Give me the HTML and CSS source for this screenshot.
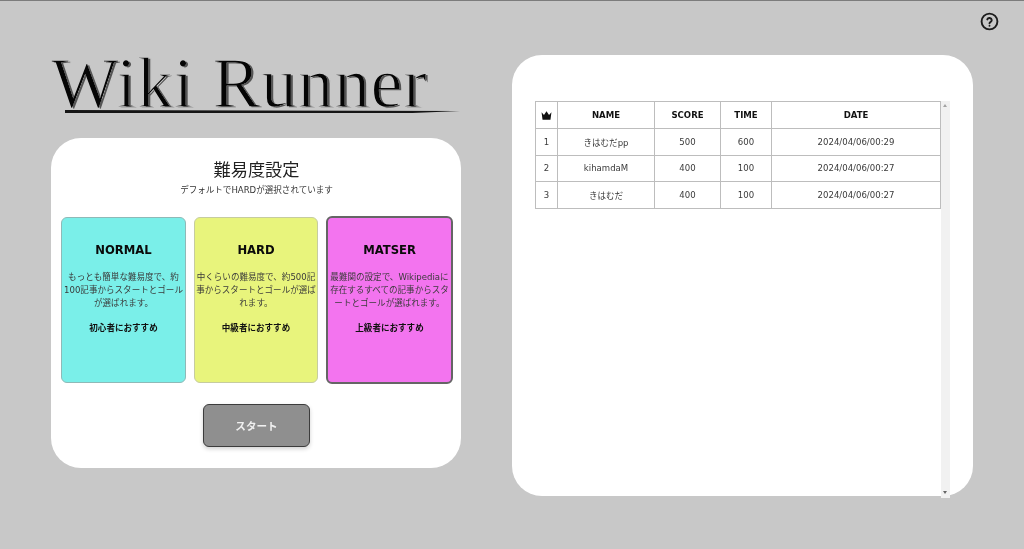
FILE: index.html
```html
<!DOCTYPE html>
<html lang="ja">
<head>
<meta charset="utf-8">
<title>Wiki Runner</title>
<link rel="stylesheet" href="styles.css">
</head>
<body>
<a class="help" aria-label="ヘルプ">
  <svg viewBox="0 0 24 24" width="19" height="19" fill="none" stroke="#1c1c1c" stroke-width="2.4" stroke-linecap="round" stroke-linejoin="round">
    <circle cx="12" cy="12" r="10"/>
    <path d="M9.2 9.4a2.9 2.9 0 0 1 5.6.9c0 1.9-2.8 2.4-2.8 4"/>
    <path d="M12 17.4v.1"/>
  </svg>
</a>
<main class="page">
  <section class="left">
    <div class="logo">
      <h1 class="logo-text">Wiki Runner</h1>
      <div class="logo-rule"></div>
    </div>
    <div class="panel settings">
      <h2 class="settings-title">難易度設定</h2>
      <p class="settings-sub">デフォルトでHARDが選択されています</p>
      <div class="cards">
        <article class="card normal">
          <h3 class="card-title">NORMAL</h3>
          <p class="card-desc">もっとも簡単な難易度で、約100記事からスタートとゴールが選ばれます。</p>
          <p class="card-rec">初心者におすすめ</p>
        </article>
        <article class="card hard">
          <h3 class="card-title">HARD</h3>
          <p class="card-desc">中くらいの難易度で、約500記事からスタートとゴールが選ばれます。</p>
          <p class="card-rec">中級者におすすめ</p>
        </article>
        <article class="card master">
          <h3 class="card-title">MATSER</h3>
          <p class="card-desc">最難関の設定で、Wikipediaに存在するすべての記事からスタートとゴールが選ばれます。</p>
          <p class="card-rec">上級者におすすめ</p>
        </article>
      </div>
      <button class="start">スタート</button>
    </div>
  </section>
  <section class="panel ranking">
    <table class="rank-table">
      <thead>
        <tr>
          <th class="col-rank">
            <svg class="crown" viewBox="0 0 12 10" width="11" height="9"><path fill="#111" d="M0.5 1.5 3.2 4.5 6 0.3 8.8 4.5 11.5 1.5 10.4 9.6H1.6Z"/></svg>
          </th>
          <th class="col-name">NAME</th>
          <th class="col-score">SCORE</th>
          <th class="col-time">TIME</th>
          <th class="col-date">DATE</th>
        </tr>
      </thead>
      <tbody>
        <tr><td>1</td><td>きはむだpp</td><td>500</td><td>600</td><td>2024/04/06/00:29</td></tr>
        <tr><td>2</td><td>kihamdaM</td><td>400</td><td>100</td><td>2024/04/06/00:27</td></tr>
        <tr><td>3</td><td>きはむだ</td><td>400</td><td>100</td><td>2024/04/06/00:27</td></tr>
      </tbody>
    </table>
    <div class="scrollbar">
      <span class="arrow-up"></span>
      <span class="arrow-down"></span>
    </div>
  </section>
</main>
</body>
</html>
```

FILE: styles.css
```css
* { box-sizing: border-box; }

html, body { margin: 0; height: 100%; }

body {
  background: #c8c8c8;
  border-top: 1px solid #7c7c7c;
  font-family: "DejaVu Sans", "Noto Sans CJK JP", sans-serif;
  font-size: 8.55px;
  color: #3a3a3a;
  overflow: hidden;
}

.help {
  position: absolute;
  top: 12px;
  right: 25px;
  width: 19px;
  height: 19px;
}

.help svg { display: block; }

.page {
  display: flex;
  align-items: flex-start;
  padding-left: 51px;
  gap: 51px;
}

.left {
  width: 410px;
  padding-top: 37px;
}

.logo { height: 100px; }

.logo-text {
  position: relative;
  margin: 0;
  font-family: "Liberation Serif", serif;
  font-weight: 400;
  font-size: 72px;
  line-height: 90px;
  letter-spacing: 0.5px;
  color: #050505;
  white-space: nowrap;
  -webkit-text-stroke: 1.5px #c8c8c8;
}

.logo-text::after {
  content: "Wiki Runner";
  position: absolute;
  left: 2px;
  top: 1px;
  color: #555;
  mix-blend-mode: darken;
}

.logo-rule {
  margin: -18px 0 0 14px;
  width: 395px;
  height: 3px;
  background: #151515;
  clip-path: polygon(0 0, 100% 30%, 88% 100%, 0 100%);
}

.panel {
  background: #fff;
  border-radius: 30px;
}

.settings {
  height: 330px;
  padding: 22px 9px 0 10px;
  display: flex;
  flex-direction: column;
  align-items: center;
}

.settings-title {
  margin: 0;
  font-size: 17.2px;
  line-height: 20px;
  font-weight: 400;
  color: #222;
}

.settings-sub {
  margin: 4px 0 0;
  line-height: 13px;
  color: #333;
}

.cards {
  margin-top: 19px;
  align-self: stretch;
  display: flex;
  align-items: center;
  gap: 8px;
}

.card {
  flex: none;
  width: 125px;
  height: 166px;
  padding: 25px 1px 0;
  border: 1px solid #b4b4b4;
  border-radius: 6px;
  text-align: center;
}

.normal { background: #7aefe9; border-color: #8fb9b7; }
.hard { background: #e8f47c; width: 124px; border-color: #c6cca0; }

.master {
  background: #f374ef;
  width: 127px;
  height: 168px;
  border: 2.5px solid #656565;
  padding-top: 25px;
}

.card-title {
  margin: 0;
  font-size: 11.6px;
  line-height: 14px;
  font-weight: 700;
  color: #0a0a0a;
}

.card-desc {
  margin: 14px 0 0;
  line-height: 13px;
}

.card-rec {
  margin: 12px 0 0;
  line-height: 13px;
  font-weight: 700;
  color: #111;
}

.start {
  margin-top: 20px;
  width: 107px;
  height: 43px;
  background: #8f8f8f;
  border: 1.5px solid #3c3c3c;
  border-radius: 6px;
  box-shadow: 0 2px 4px rgba(0, 0, 0, 0.18);
  color: #f0f0f0;
  font-family: inherit;
  font-size: 10.6px;
  font-weight: 700;
}

.ranking {
  width: 461px;
  height: 440.5px;
  margin-top: 54px;
  padding: 46px 0 0 23px;
  display: flex;
  align-items: flex-start;
}

.rank-table {
  width: 406px;
  border-collapse: collapse;
  table-layout: fixed;
  text-align: center;
}

.rank-table th,
.rank-table td {
  height: 26.75px;
  padding: 0;
  border: 1px solid #bdbdbd;
}

.rank-table th {
  font-weight: 700;
  color: #111;
}

.col-rank { width: 22px; }
.col-name { width: 97px; }
.col-score { width: 66px; }
.col-time { width: 51px; }
.col-date { width: 169px; }

.crown { display: block; margin: 1px auto 0; }

.scrollbar {
  flex: none;
  width: 9px;
  height: 397px;
  margin-left: -0.5px;
  background: #f1f1f1;
  display: flex;
  flex-direction: column;
  justify-content: space-between;
  align-items: center;
  padding: 3px 0 4px;
}

.arrow-up,
.arrow-down {
  width: 0;
  height: 0;
  border-left: 2.5px solid transparent;
  border-right: 2.5px solid transparent;
}

.arrow-up { border-bottom: 3px solid #a3a3a3; }
.arrow-down { border-top: 3px solid #666; }
```
